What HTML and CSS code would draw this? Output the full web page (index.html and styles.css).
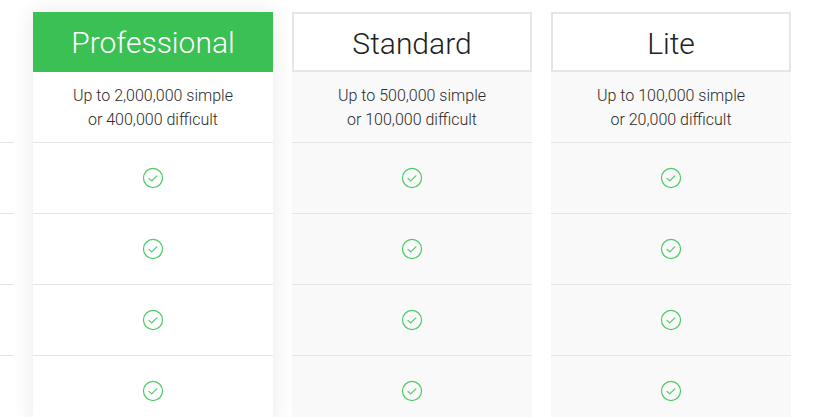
FILE: index.html
```html
<!DOCTYPE html>
<html>
<head>
<meta charset="utf-8">
<link rel="stylesheet" href="styles.css">
</head>
<body>
<div class="table">
  <div class="col labels">
    <div class="head-space"></div>
    <div class="cell desc"></div>
    <div class="cell"></div>
    <div class="cell"></div>
    <div class="cell"></div>
    <div class="cell"></div>
  </div>
  <div class="col plan featured">
    <div class="head">Professional</div>
    <div class="cell desc">Up to 2,000,000 simple<br>or 400,000 difficult</div>
    <div class="cell"><svg class="check" viewBox="0 0 24 24"><circle cx="12" cy="12" r="10.4"/><polyline points="7.6,12.4 10.6,15.2 16.2,9.6"/></svg></div>
    <div class="cell"><svg class="check" viewBox="0 0 24 24"><circle cx="12" cy="12" r="10.4"/><polyline points="7.6,12.4 10.6,15.2 16.2,9.6"/></svg></div>
    <div class="cell"><svg class="check" viewBox="0 0 24 24"><circle cx="12" cy="12" r="10.4"/><polyline points="7.6,12.4 10.6,15.2 16.2,9.6"/></svg></div>
    <div class="cell"><svg class="check" viewBox="0 0 24 24"><circle cx="12" cy="12" r="10.4"/><polyline points="7.6,12.4 10.6,15.2 16.2,9.6"/></svg></div>
  </div>
  <div class="col plan">
    <div class="head">Standard</div>
    <div class="cell desc">Up to 500,000 simple<br>or 100,000 difficult</div>
    <div class="cell"><svg class="check" viewBox="0 0 24 24"><circle cx="12" cy="12" r="10.4"/><polyline points="7.6,12.4 10.6,15.2 16.2,9.6"/></svg></div>
    <div class="cell"><svg class="check" viewBox="0 0 24 24"><circle cx="12" cy="12" r="10.4"/><polyline points="7.6,12.4 10.6,15.2 16.2,9.6"/></svg></div>
    <div class="cell"><svg class="check" viewBox="0 0 24 24"><circle cx="12" cy="12" r="10.4"/><polyline points="7.6,12.4 10.6,15.2 16.2,9.6"/></svg></div>
    <div class="cell"><svg class="check" viewBox="0 0 24 24"><circle cx="12" cy="12" r="10.4"/><polyline points="7.6,12.4 10.6,15.2 16.2,9.6"/></svg></div>
  </div>
  <div class="col plan">
    <div class="head">Lite</div>
    <div class="cell desc">Up to 100,000 simple<br>or 20,000 difficult</div>
    <div class="cell"><svg class="check" viewBox="0 0 24 24"><circle cx="12" cy="12" r="10.4"/><polyline points="7.6,12.4 10.6,15.2 16.2,9.6"/></svg></div>
    <div class="cell"><svg class="check" viewBox="0 0 24 24"><circle cx="12" cy="12" r="10.4"/><polyline points="7.6,12.4 10.6,15.2 16.2,9.6"/></svg></div>
    <div class="cell"><svg class="check" viewBox="0 0 24 24"><circle cx="12" cy="12" r="10.4"/><polyline points="7.6,12.4 10.6,15.2 16.2,9.6"/></svg></div>
    <div class="cell"><svg class="check" viewBox="0 0 24 24"><circle cx="12" cy="12" r="10.4"/><polyline points="7.6,12.4 10.6,15.2 16.2,9.6"/></svg></div>
  </div>
</div>
</body>
</html>
```

FILE: styles.css
```css
html, body {
  margin: 0;
  padding: 0;
  background: #fff;
  overflow: hidden;
}
body {
  font-family: Roboto, "Liberation Sans", sans-serif;
  height: 417px;
}
.table {
  display: flex;
  gap: 19px;
  padding-top: 12px;
}
.col {
  display: flex;
  flex-direction: column;
}
.labels {
  width: 14px;
}
.head-space {
  height: 60px;
}
.plan {
  width: 240px;
  background: #f9f9f9;
}
.featured {
  background: #fff;
  position: relative;
  z-index: 1;
  box-shadow: 0 0 22px rgba(0, 0, 0, 0.09);
}
.head {
  height: 60px;
  box-sizing: border-box;
  border: 2px solid #e6e6e6;
  background: #fff;
  display: flex;
  align-items: center;
  justify-content: center;
  font-size: 30px;
  font-weight: 300;
  color: #222;
  padding-top: 2px;
}
.featured .head {
  border: none;
  background: #3bc054;
  color: #fff;
  padding-top: 0;
}
.cell {
  height: 70px;
  border-bottom: 1px solid #e5e5e5;
  display: flex;
  align-items: center;
  justify-content: center;
}
.desc {
  height: 68px;
  padding-top: 2px;
  font-size: 16px;
  font-weight: 300;
  line-height: 24px;
  color: #2a2a2a;
  text-align: center;
}
.check {
  width: 22px;
  height: 22px;
  fill: none;
  stroke: #4ccb65;
  stroke-width: 1.3;
  stroke-linecap: round;
  stroke-linejoin: round;
}
```
